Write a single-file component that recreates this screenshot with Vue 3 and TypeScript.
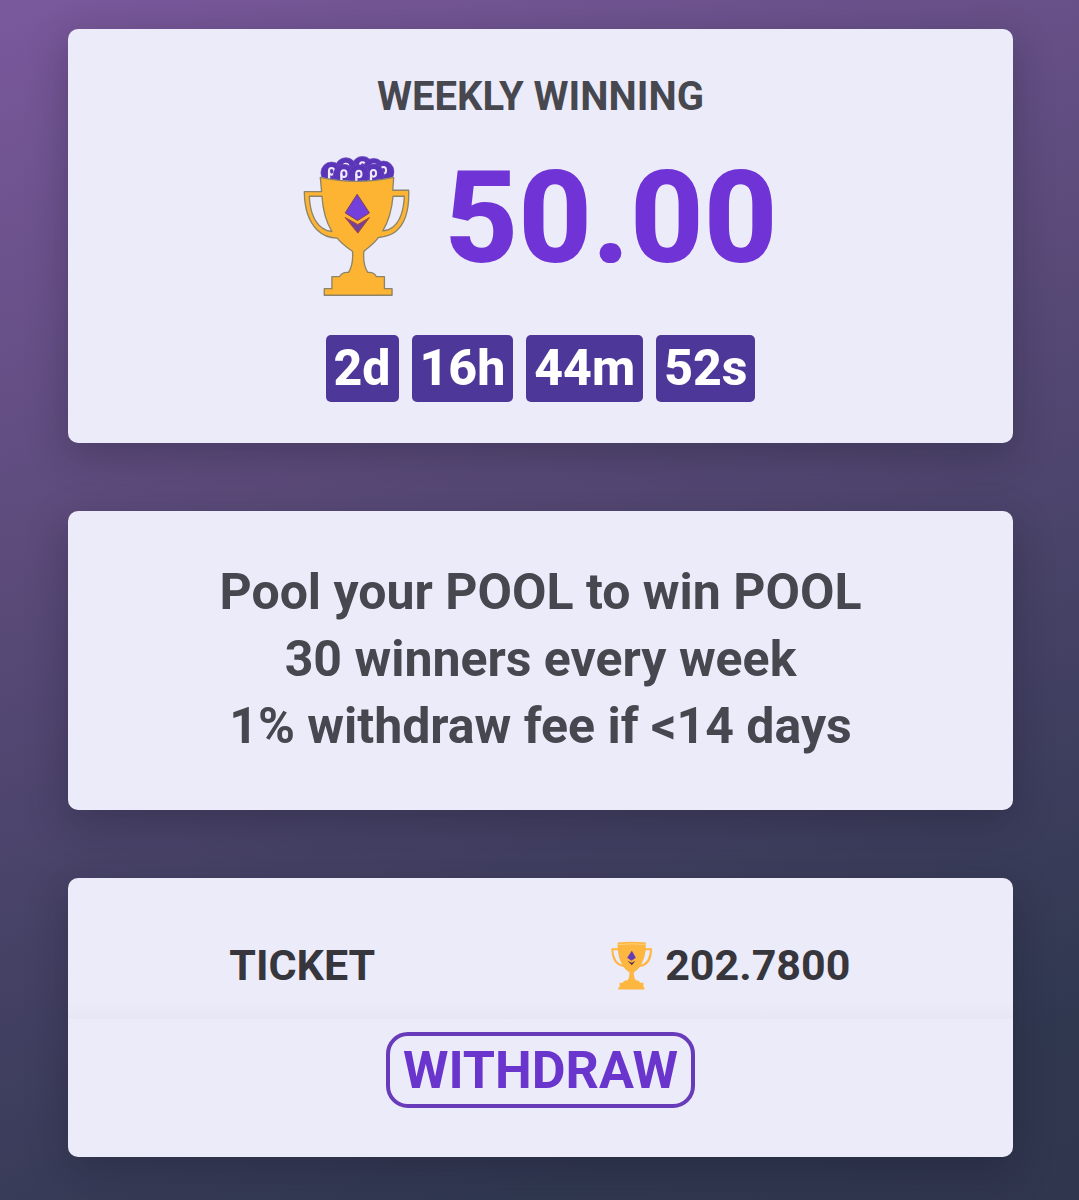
<script setup lang="ts">
interface TimePart {
  value: number
  unit: string
}

interface Coin {
  x: number
  y: number
}

const prize = '50.00'
const tickets = '202.7800'

const remaining: TimePart[] = [
  { value: 2, unit: 'd' },
  { value: 16, unit: 'h' },
  { value: 44, unit: 'm' },
  { value: 52, unit: 's' },
]

const rules: string[] = [
  'Pool your POOL to win POOL',
  '30 winners every week',
  '1% withdraw fee if <14 days',
]

// Back row first, so that the front coins lie over it.
const coins: Coin[] = [
  { x: 213, y: 67 },
  { x: 163, y: 71 },
  { x: 247, y: 73 },
  { x: 120, y: 84 },
  { x: 276, y: 81 },
  { x: 157, y: 91 },
  { x: 246, y: 90 },
  { x: 202, y: 92 },
]
</script>

<template>
  <main class="page">
    <section class="card prize">
      <h2 class="title">WEEKLY WINNING</h2>
      <div class="amount">
        <svg class="trophy" viewBox="34 34 322 424" aria-hidden="true">
          <defs>
            <clipPath id="pile">
              <path d="M84 30H310V97Q196 121 84 97Z" />
            </clipPath>
          </defs>
          <g clip-path="url(#pile)">
            <g v-for="(coin, i) in coins" :key="i">
              <circle :cx="coin.x" :cy="coin.y" r="32" fill="#5a35b8" stroke="#6c49c0" stroke-width="2" />
              <ellipse :cx="coin.x" :cy="coin.y - 4" rx="8" ry="10" fill="none" stroke="#efe9fb" stroke-width="6" />
              <rect :x="coin.x - 11" :y="coin.y - 4" width="7" height="24" fill="#efe9fb" />
            </g>
          </g>
          <path
            fill="#fdb433"
            fill-rule="evenodd"
            stroke="#8d8468"
            stroke-width="4"
            stroke-linejoin="round"
            d="M86 98Q196 122 307 98L304 137H352C354 190 342 238 312 262C298 273 280 277 261 279C248 298 232 308 217 321C215 346 218 368 229 384C242 383 251 388 255 397H279V433H302V453H98V433H121V397H144C148 388 159 383 171 384C181 368 185 346 183 321C167 309 150 298 137 281C111 281 92 272 76 256C50 229 38 190 38 141H90ZM53 155C55 200 67 232 91 250Q104 260 121 261C103 232 94 198 91 155ZM305 155C301 198 292 230 274 259Q291 258 304 248C329 229 337 196 339 155Z"
          />
          <path fill="#7340dc" stroke="#823c58" stroke-width="3" d="M197 149L161 205L198 228L234 205Z" />
          <path fill="#75409a" stroke="#a64c30" stroke-width="3" d="M161 219L199 240L234 219L199 266Z" />
        </svg>
        <strong class="value">{{ prize }}</strong>
      </div>
      <div class="countdown">
        <span v-for="part in remaining" :key="part.unit" class="part">{{ part.value }}{{ part.unit }}</span>
      </div>
    </section>

    <section class="card rules">
      <p v-for="rule in rules" :key="rule">{{ rule }}</p>
    </section>

    <section class="card account">
      <div class="holding">
        <span class="cell">TICKET</span>
        <span class="cell">
          <svg class="mini" viewBox="32 32 124 147" aria-hidden="true">
            <path
              fill="#fdb640"
              fill-rule="evenodd"
              d="M52 36Q94 32 137 36V53H156C156 80 151 105 119 110C115 117 106 122 101 127Q101 143 107 150Q118 150 120 158H130V171H133V178H54V171H58V158H68Q70 150 82 150Q88 143 88 127C82 122 74 117 70 110C39 104 34 80 33 53H52ZM39 59Q41 94 66 103Q54 82 53 59ZM137 59Q135 82 123 103Q148 94 150 59Z"
            />
            <path fill="none" stroke="#ffd07a" stroke-width="3" d="M54 42Q94 38 135 42" />
            <path fill="#653bb6" d="M95 61L81 82L94 91L107 82Z" />
            <path fill="#50354d" d="M82 91L95 97L106 91L95 105Z" />
          </svg>
          {{ tickets }}
        </span>
      </div>
      <button type="button" class="withdraw">WITHDRAW</button>
    </section>
  </main>
</template>

<style>
body {
  margin: 0;
}
</style>

<style scoped>
.page {
  box-sizing: border-box;
  min-height: 100vh;
  display: flex;
  flex-direction: column;
  gap: 68px;
  padding: 29px 66px 43px 68px;
  font-family: Roboto, "Liberation Sans", sans-serif;
  font-weight: 700;
  color: #47474f;
  background: linear-gradient(162deg, #7a589c 0%, #5c4b7b 36%, #454165 62%, #303850 88%, #30364e 100%);
}

.card {
  display: flex;
  flex-direction: column;
  align-items: center;
  border-radius: 10px;
  background: #ecebfa;
  box-shadow: 0 12px 40px rgba(20, 20, 35, 0.3);
}

.prize {
  padding: 46px 20px 41px;
}

.title {
  margin: 0;
  font-size: 40px;
  line-height: 44px;
}

.amount {
  display: flex;
  align-items: flex-start;
  gap: 34px;
  margin-top: 37px;
}

.trophy {
  width: 107px;
  height: 141px;
}

.value {
  font-size: 128px;
  font-weight: 800;
  line-height: 124px;
  color: #6f33d6;
}

.countdown {
  display: flex;
  gap: 13px;
  margin-top: 38px;
}

.part {
  padding: 5px 8px 6px;
  border-radius: 5px;
  font-size: 50px;
  font-weight: 800;
  line-height: 56px;
  color: #fff;
  background: #4d3798;
}

.rules {
  padding: 48px 20px 50px;
}

.rules p {
  margin: 0;
  font-size: 50px;
  line-height: 67px;
}

.account {
  padding: 55px 0 49px;
}

.holding {
  display: flex;
  align-self: stretch;
  padding: 0 68px 22px 20px;
  font-size: 43px;
  line-height: 64px;
  color: #36363c;
  background: linear-gradient(to bottom, rgba(228, 227, 240, 0) 80%, #e7e6f4 100%);
}

.cell {
  flex: 1;
  display: flex;
  align-items: center;
  justify-content: center;
  gap: 13px;
}

.mini {
  width: 41px;
  height: 49px;
}

.withdraw {
  margin-top: 13px;
  padding: 8px 13px 6px;
  border: 4px solid #683bba;
  border-radius: 22px;
  font: inherit;
  font-size: 52px;
  line-height: 54px;
  color: #6a35cd;
  background: transparent;
}
</style>
